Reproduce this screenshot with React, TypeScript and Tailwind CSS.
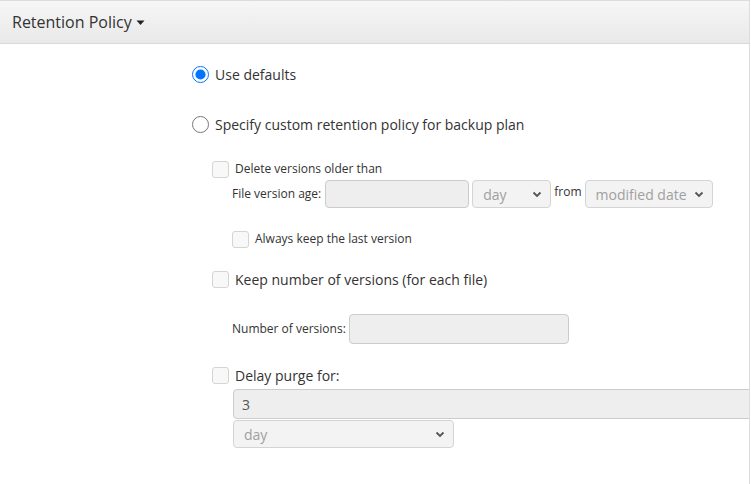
import React from 'react';

const font = { fontFamily: '"Open Sans", "Noto Sans", sans-serif' };

const Check = () => (
    <div className="w-[17px] h-[17px] shrink-0 rounded-[3px] border border-[#d4d4d4] bg-[#f8f8f8]" />
);

const Chevron = () => (
    <svg width="10" height="7" viewBox="0 0 10 7" className="shrink-0">
        <path d="M1.5 1.5 L5 5 L8.5 1.5" fill="none" stroke="#555" strokeWidth="1.8" />
    </svg>
);

const Select = ({ label, className = '' }: { label: string; className?: string }) => (
    <div className={`flex items-center justify-between rounded-[4px] border border-[#d4d4d4] bg-[#f3f3f3] pl-[10px] pr-[8px] text-[14px] text-[#a0a0a0] ${className}`}>
        <span>{label}</span>
        <Chevron />
    </div>
);

const Field = ({ className = '', children }: { className?: string; children?: React.ReactNode }) => (
    <div className={`flex items-center rounded-[4px] border border-[#cccccc] bg-[#eeeeee] px-[8px] text-[14px] text-[#555] ${className}`}>
        {children}
    </div>
);

export default function App() {
    return (
        <div className="w-[751px] h-[484px] bg-white text-[#333]" style={font}>
            <div className="w-[750px] h-[484px] overflow-hidden border-t border-r border-[#dcdcdc]">
                <div className="h-[43px] flex items-center px-[12px] border-b border-[#dadada] bg-gradient-to-b from-[#f6f6f6] to-[#e9e9e9]">
                    <span className="text-[16px] text-[#333]">Retention Policy</span>
                    <svg width="9" height="6" viewBox="0 0 9 6" className="ml-[4px] mt-[2px]">
                        <path d="M0.5 0.5 L8.5 0.5 L4.5 5 Z" fill="#222" />
                    </svg>
                </div>

                <div className="pl-[192px] pt-[22px]">
                    <label className="flex items-center gap-[6px] h-[17px] text-[14px]">
                        <input type="radio" name="ret" defaultChecked className="w-[17px] h-[17px] m-0" />
                        <span className="-mt-[1px]">Use defaults</span>
                    </label>
                    <label className="flex items-center gap-[6px] h-[17px] mt-[33px] text-[14px]">
                        <input type="radio" name="ret" className="w-[17px] h-[17px] m-0" />
                        <span className="-mt-[1px]">Specify custom retention policy for backup plan</span>
                    </label>

                    <div className="pl-[20px] mt-[28px]">
                        <div className="flex items-center gap-[6px] h-[17px] text-[12px]">
                            <Check />
                            <span className="-mt-[2px]">Delete versions older than</span>
                        </div>
                        <div className="flex items-center pl-[20px] mt-[2px] h-[28px] text-[12px]">
                            <span className="mr-[4px] -mt-[1px]">File version age:</span>
                            <Field className="w-[144px] h-[28px]" />
                            <Select label="day" className="w-[79px] h-[28px] ml-[3px]" />
                            <span className="mx-[3px] -mt-[5px]">from</span>
                            <Select label="modified date" className="w-[128px] h-[28px]" />
                        </div>
                        <div className="flex items-center gap-[6px] h-[17px] pl-[20px] mt-[23px] text-[12px]">
                            <Check />
                            <span className="-mt-[1px]">Always keep the last version</span>
                        </div>

                        <div className="flex items-center gap-[6px] h-[17px] mt-[23px] text-[14px]">
                            <Check />
                            <span className="-mt-[1px]">Keep number of versions (for each file)</span>
                        </div>
                        <div className="flex items-center pl-[20px] mt-[26px] h-[30px] text-[12px]">
                            <span className="mr-[3px]">Number of versions:</span>
                            <Field className="w-[220px] h-[30px]" />
                        </div>

                        <div className="flex items-center gap-[6px] h-[17px] mt-[23px] text-[14px]">
                            <Check />
                            <span className="-mt-[1px]">Delay purge for:</span>
                        </div>
                        <div className="pl-[21px] mt-[5px]">
                            <Field className="w-[540px] h-[30px]">3</Field>
                            <Select label="day" className="w-[221px] h-[28px] mt-[1px]" />
                        </div>
                    </div>
                </div>
            </div>
        </div>
    );
}
